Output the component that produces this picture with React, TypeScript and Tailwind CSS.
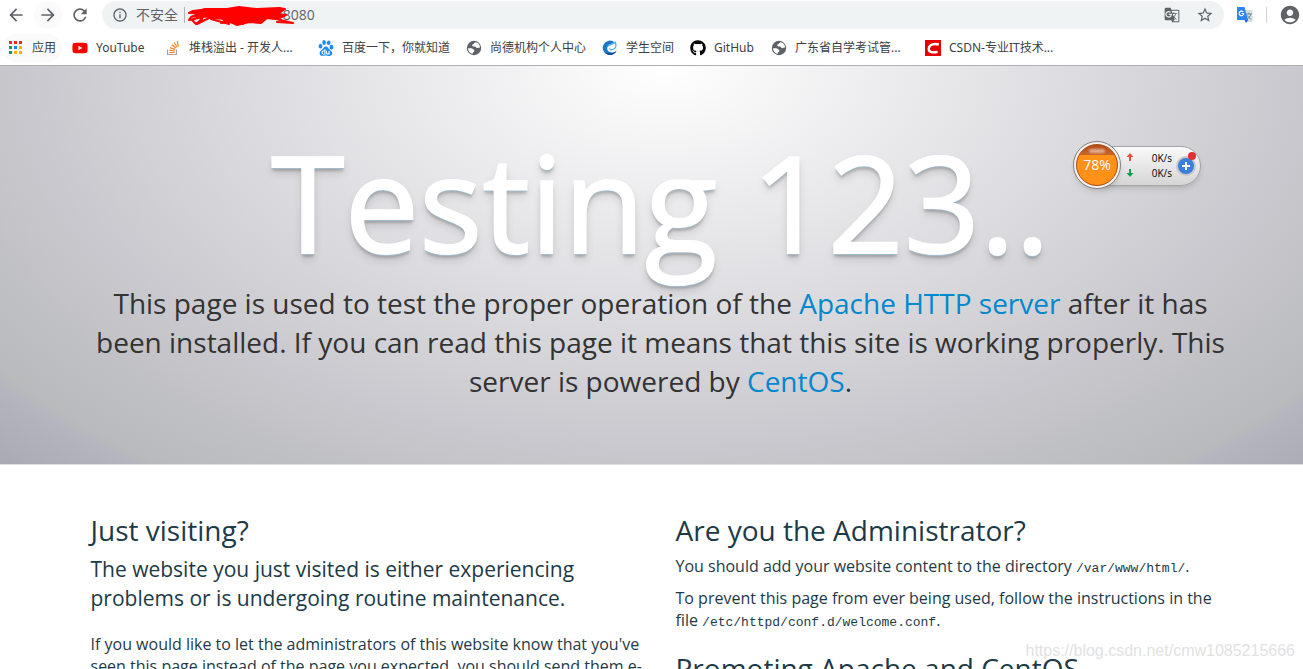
import React from 'react';
import { FaGithub, FaYoutube } from 'react-icons/fa';
import { MdAccountCircle, MdArrowBack, MdArrowForward, MdGTranslate, MdInfoOutline, MdRefresh, MdStarBorder } from 'react-icons/md';
import { SiBaidu } from 'react-icons/si';

const APP_COLORS = ['#f02b1d', '#f02b1d', '#f02b1d', '#0f9d58', '#1a86f0', '#fbae05', '#0f9d58', '#fbae05', '#fbae05'];

const AppsIcon = () => (
  <svg viewBox="0 0 13 13" className="size-[13px]">
    {APP_COLORS.map((color, i) => (
      <rect key={i} x={(i % 3) * 5} y={Math.floor(i / 3) * 5} width="3" height="3" fill={color} />
    ))}
  </svg>
);

const StackIcon = () => (
  <svg viewBox="0 0 16 16" className="size-4" fill="none" strokeWidth="1.2">
    <path d="M2.500 9.500v5h9v-5" stroke="#a5a5a5" />
    <path d="M4.300 12.500h5.500M4.400 10.200l5.400.8M5 7.600l5.200 1.800M6.600 4.800l4.500 3.300M9 2.500l3.200 4.600M12.300 1l1 5.500" stroke="#f48024" />
  </svg>
);

const GlobeIcon = () => (
  <svg viewBox="0 0 16 16" className="size-4">
    <circle cx="8" cy="8" r="7.2" fill="#5f6368" />
    <path d="M9.500 2.300C8 2.800 8.300 4 7 4.300 5.500 4.700 6 6.300 7.500 6.500 9 6.700 10.300 6.500 10.500 8c1.300.3 2.300-.4 3.500-.5.200-2.500-2-5-4.500-5.200Z" fill="#fff" />
    <path d="M2 8.200C3.500 8.500 5.500 8 6.500 8.800 7.500 9.600 8.500 9.800 8.300 11 8.200 12 6.800 12 6.700 13.800 4 13.400 2 11 2 8.200Z" fill="#fff" />
  </svg>
);

const SpaceIcon = () => (
  <svg viewBox="0 0 16 16" className="size-4">
    <path d="M12.500 2.200A7.200 7.200 0 1 0 15 9.500 5 5 0 0 1 9 12.300C5 12 4 8 6.500 5.600 8.500 3.500 11 3.600 12.500 2.200Z" fill="#1a78c8" />
    <path d="M6 6C8.500 3.500 11 4.500 13.300 2.300 14.500 5.500 14 8.500 11 9.500 9.500 10 8 9.500 7.500 8.500" fill="none" stroke="#4db5ea" strokeWidth="1.300" />
    <path d="M3 12.500A7 7 0 0 0 14.500 11C11.500 13.500 7 14.500 3 12.500Z" fill="#0b3f8f" />
  </svg>
);

const CsdnIcon = () => (
  <svg viewBox="0 0 16 16" className="size-4">
    <rect width="16" height="16" fill="#e60000" />
    <path d="M13.800 4.500C10 3.400 4.400 3.800 3.800 8.300 3.300 12.600 8 12.800 12.600 11.800" fill="none" stroke="#fff" strokeWidth="2.400" />
  </svg>
);

const TranslateIcon = () => (
  <svg viewBox="0 0 18 18" className="size-[18px]">
    <path d="M7 4h9.500v12H11z" fill="#dcdcdc" />
    <path d="M10 8h6M12.800 6.800V8M14.800 8c-.5 2.500-2 4-4 5M11.500 9.500c.7 1.500 2 2.800 3.800 3.800" fill="none" stroke="#5f8f9a" strokeWidth="1" />
    <path d="M1 1h7.500l3.500 13H1z" fill="#2b86f5" />
    <path d="M8.500 14H12l-2 3z" fill="#1a56e0" />
    <path d="M7.200 6A2.300 2.300 0 1 0 7.700 7.500H5.500" fill="none" stroke="#fff" strokeWidth="1.200" />
  </svg>
);

const Scribble = () => (
  <svg viewBox="0 0 110 22" className="absolute top-0 left-0 h-[22px] w-[110px]" fill="none" stroke="#f00" strokeWidth="2" strokeLinecap="round" strokeLinejoin="round">
    <path d="M18 4L40 4 52 2 70 4 92 3 96 5 90 9 97 11 88 14 80 13 74 18 62 17 50 20 44 17 34 18 40 14 22 13 28 11 10 12 22 8 6 8Z" fill="#f00" />
    <path d="M22 4L6 6 2 8l14-1L4 12l16-3-15 6 4 4 6-5M4 12l-2 3 14-3-6 7 12-6M92 3l6 1-8 5 9 1-10 4 17 4-16-1M24 14l18 5-6-5 20 5" />
  </svg>
);

const BOOKMARKS = [
  { label: 'YouTube', icon: <FaYoutube className="size-4 text-[#f00]" />, width: 'w-[93px]' },
  { label: '堆栈溢出 - 开发人...', icon: <StackIcon />, width: 'w-[153px]' },
  { label: '百度一下，你就知道', icon: <SiBaidu className="size-4 text-[#1e88f5]" />, width: 'w-[148px]' },
  { label: '尚德机构个人中心', icon: <GlobeIcon />, width: 'w-[136px]' },
  { label: '学生空间', icon: <SpaceIcon />, width: 'w-[88px]' },
  { label: 'GitHub', icon: <FaGithub className="size-4 text-black" />, width: 'w-[81px]' },
  { label: '广东省自学考试管...', icon: <GlobeIcon />, width: 'w-[154px]' },
  { label: 'CSDN-专业IT技术...', icon: <CsdnIcon />, width: 'w-[140px]' },
];

const BrowserBar: React.FC = () => (
  <header className="border-b border-[#b0b0b4] bg-white font-['Noto_Sans','Noto_Sans_CJK_SC',sans-serif] text-[#3c4043]">
    <div className="flex h-[30px] items-center gap-3 pl-1.5 text-[#5f6368]">
      <button aria-label="Back"><MdArrowBack className="size-5" /></button>
      <button aria-label="Forward" className="rounded-full bg-[#fafafa] ring-4 ring-[#fafafa]"><MdArrowForward className="size-5" /></button>
      <button aria-label="Reload"><MdRefresh className="size-5" /></button>
      <div className="flex h-7 flex-1 items-center rounded-full bg-[#eff3f4] px-2.5 text-sm">
        <MdInfoOutline className="size-4" />
        <span className="ml-2">不安全</span>
        <span className="ml-1.5 mr-0.5 h-4 w-px bg-[#b0b4b7]" />
        <div className="relative flex-1 pl-[92px] font-['Open_Sans',sans-serif]">
          :8080
          <Scribble />
        </div>
        <button aria-label="Translate" className="mr-4"><MdGTranslate className="size-4" /></button>
        <button aria-label="Bookmark"><MdStarBorder className="size-[18px]" /></button>
      </div>
      <button aria-label="Google Translate"><TranslateIcon /></button>
      <span className="h-4 w-px bg-[#cfd1d3]" />
      <button aria-label="Profile" className="pr-0.5"><MdAccountCircle className="size-[22px]" /></button>
    </div>
    <nav className="flex h-[35px] items-center text-xs whitespace-nowrap">
      <a href="#" className="ml-0.5 flex h-7 w-[60px] items-center gap-2.5 rounded-full bg-[#fafafa] pl-[7px]"><AppsIcon />应用</a>
      <div className="flex items-center pl-2.5">
        {BOOKMARKS.map((b) => (
          <a key={b.label} href="#" className={`flex items-center gap-2 ${b.width}`}>
            {b.icon}
            {b.label}
          </a>
        ))}
      </div>
    </nav>
  </header>
);

const SpeedWidget: React.FC = () => (
  <aside className="absolute top-[75px] right-[102px] flex items-center font-['Open_Sans',sans-serif]">
    <div className="z-10 size-12 rounded-full border border-[#85807e] bg-[#f4f2f0] p-0.5 shadow-md">
      <div className="relative flex size-full items-center justify-center rounded-full border border-[#a84a10] bg-linear-to-b from-[#b54c18] from-0% via-[#c9652a] via-24% to-[#ff9018] to-25% text-sm text-white">
        <span className="absolute top-1 h-1 w-4 rounded-full bg-white/50 blur-[1px]" />
        78%
      </div>
    </div>
    <div className="mt-0.5 -ml-5 flex h-10 items-center rounded-r-full border border-[#a5a5a8] bg-linear-to-b from-[#fafafa] to-[#d5d5d6] pr-1.5 pl-6 text-[10px] leading-[15px] text-black shadow-md">
      <svg viewBox="0 0 8 26" className="h-[26px] w-2">
        <path d="M4 0l3.500 4H5v4H3V4H.500z" fill="#ea4e40" />
        <path d="M4 24l3.500-4H5v-4H3v4H.500z" fill="#15a050" />
      </svg>
      <div className="w-[38px] text-right"><div>0K/s</div><div>0K/s</div></div>
      <button aria-label="Boost" className="relative ml-1.5 size-4 rounded-full bg-[#3a7fdb] ring-2 ring-[#c8c8ca]">
        <svg viewBox="0 0 16 16" className="size-full" stroke="#fff" strokeWidth="2"><path d="M4 8h8M8 4v8" /></svg>
        <span className="absolute -top-1.5 -right-0.5 size-2 rounded-full bg-[#e03030]" />
      </button>
    </div>
  </aside>
);

const App: React.FC = () => (
  <div className="relative h-screen overflow-hidden bg-white font-['Open_Sans',sans-serif] text-base leading-[22px] text-[#1d3a47]">
    <BrowserBar />
    <section className="relative border-b border-[#e2e2e2] bg-[radial-gradient(ellipse_farthest-corner_at_51%_0%,#fff_0%,#c9c8ce_68%,#b8babc_89%,#b4b4bf_91%,#a9aab4_100%)] pt-14 pb-[63px] pl-[18px] text-center text-[#333]">
      <div className="mx-auto max-w-[1170px] px-[15px]">
        <h1 className="text-[133px] leading-[160px] font-medium text-white [-webkit-text-stroke:2px_#fff] [text-shadow:0_1px_0_#a3bccb,0_2px_0_#a3bccb,0_4px_3px_#0003,0_6px_10px_#0002]">Testing 123..</h1>
        <p className="mt-0.5 text-[28px] leading-[39px]">
          This page is used to test the proper operation of the <a href="#" className="text-[#0088ce]">Apache HTTP server</a> after it has been installed. If you can read this page it means that this site is working properly. This server is powered by <a href="#" className="text-[#0088ce]">CentOS</a>.
        </p>
      </div>
      <SpeedWidget />
    </section>
    <main className="pt-12 pl-[18px]">
      <div className="mx-auto grid max-w-[1170px] grid-cols-2">
        <section className="px-[15px]">
          <h2 className="text-[28px] leading-[34px]">Just visiting?</h2>
          <p className="mt-2 text-[21px] leading-[29px]">The website you just visited is either experiencing problems or is undergoing routine maintenance.</p>
          <p className="mt-5">If you would like to let the administrators of this website know that you've seen this page instead of the page you expected, you should send them e-mail.</p>
        </section>
        <section className="px-[15px]">
          <h2 className="text-[28px] leading-[34px]">Are you the Administrator?</h2>
          <p className="mt-2">You should add your website content to the directory <code className="font-['Liberation_Mono',monospace] text-[13px] leading-none">/var/www/html/</code>.</p>
          <p className="mt-2.5">To prevent this page from ever being used, follow the instructions in the file <code className="font-['Liberation_Mono',monospace] text-[13px] leading-none">/etc/httpd/conf.d/welcome.conf</code>.</p>
          <h2 className="mt-5 text-[28px] leading-[34px]">Promoting Apache and CentOS</h2>
        </section>
      </div>
    </main>
    <span className="absolute right-2 bottom-1.5 font-['Liberation_Sans',sans-serif] text-base text-[#e2e2e2]">https://blog.csdn.net/cmw1085215666</span>
  </div>
);

export default App;
